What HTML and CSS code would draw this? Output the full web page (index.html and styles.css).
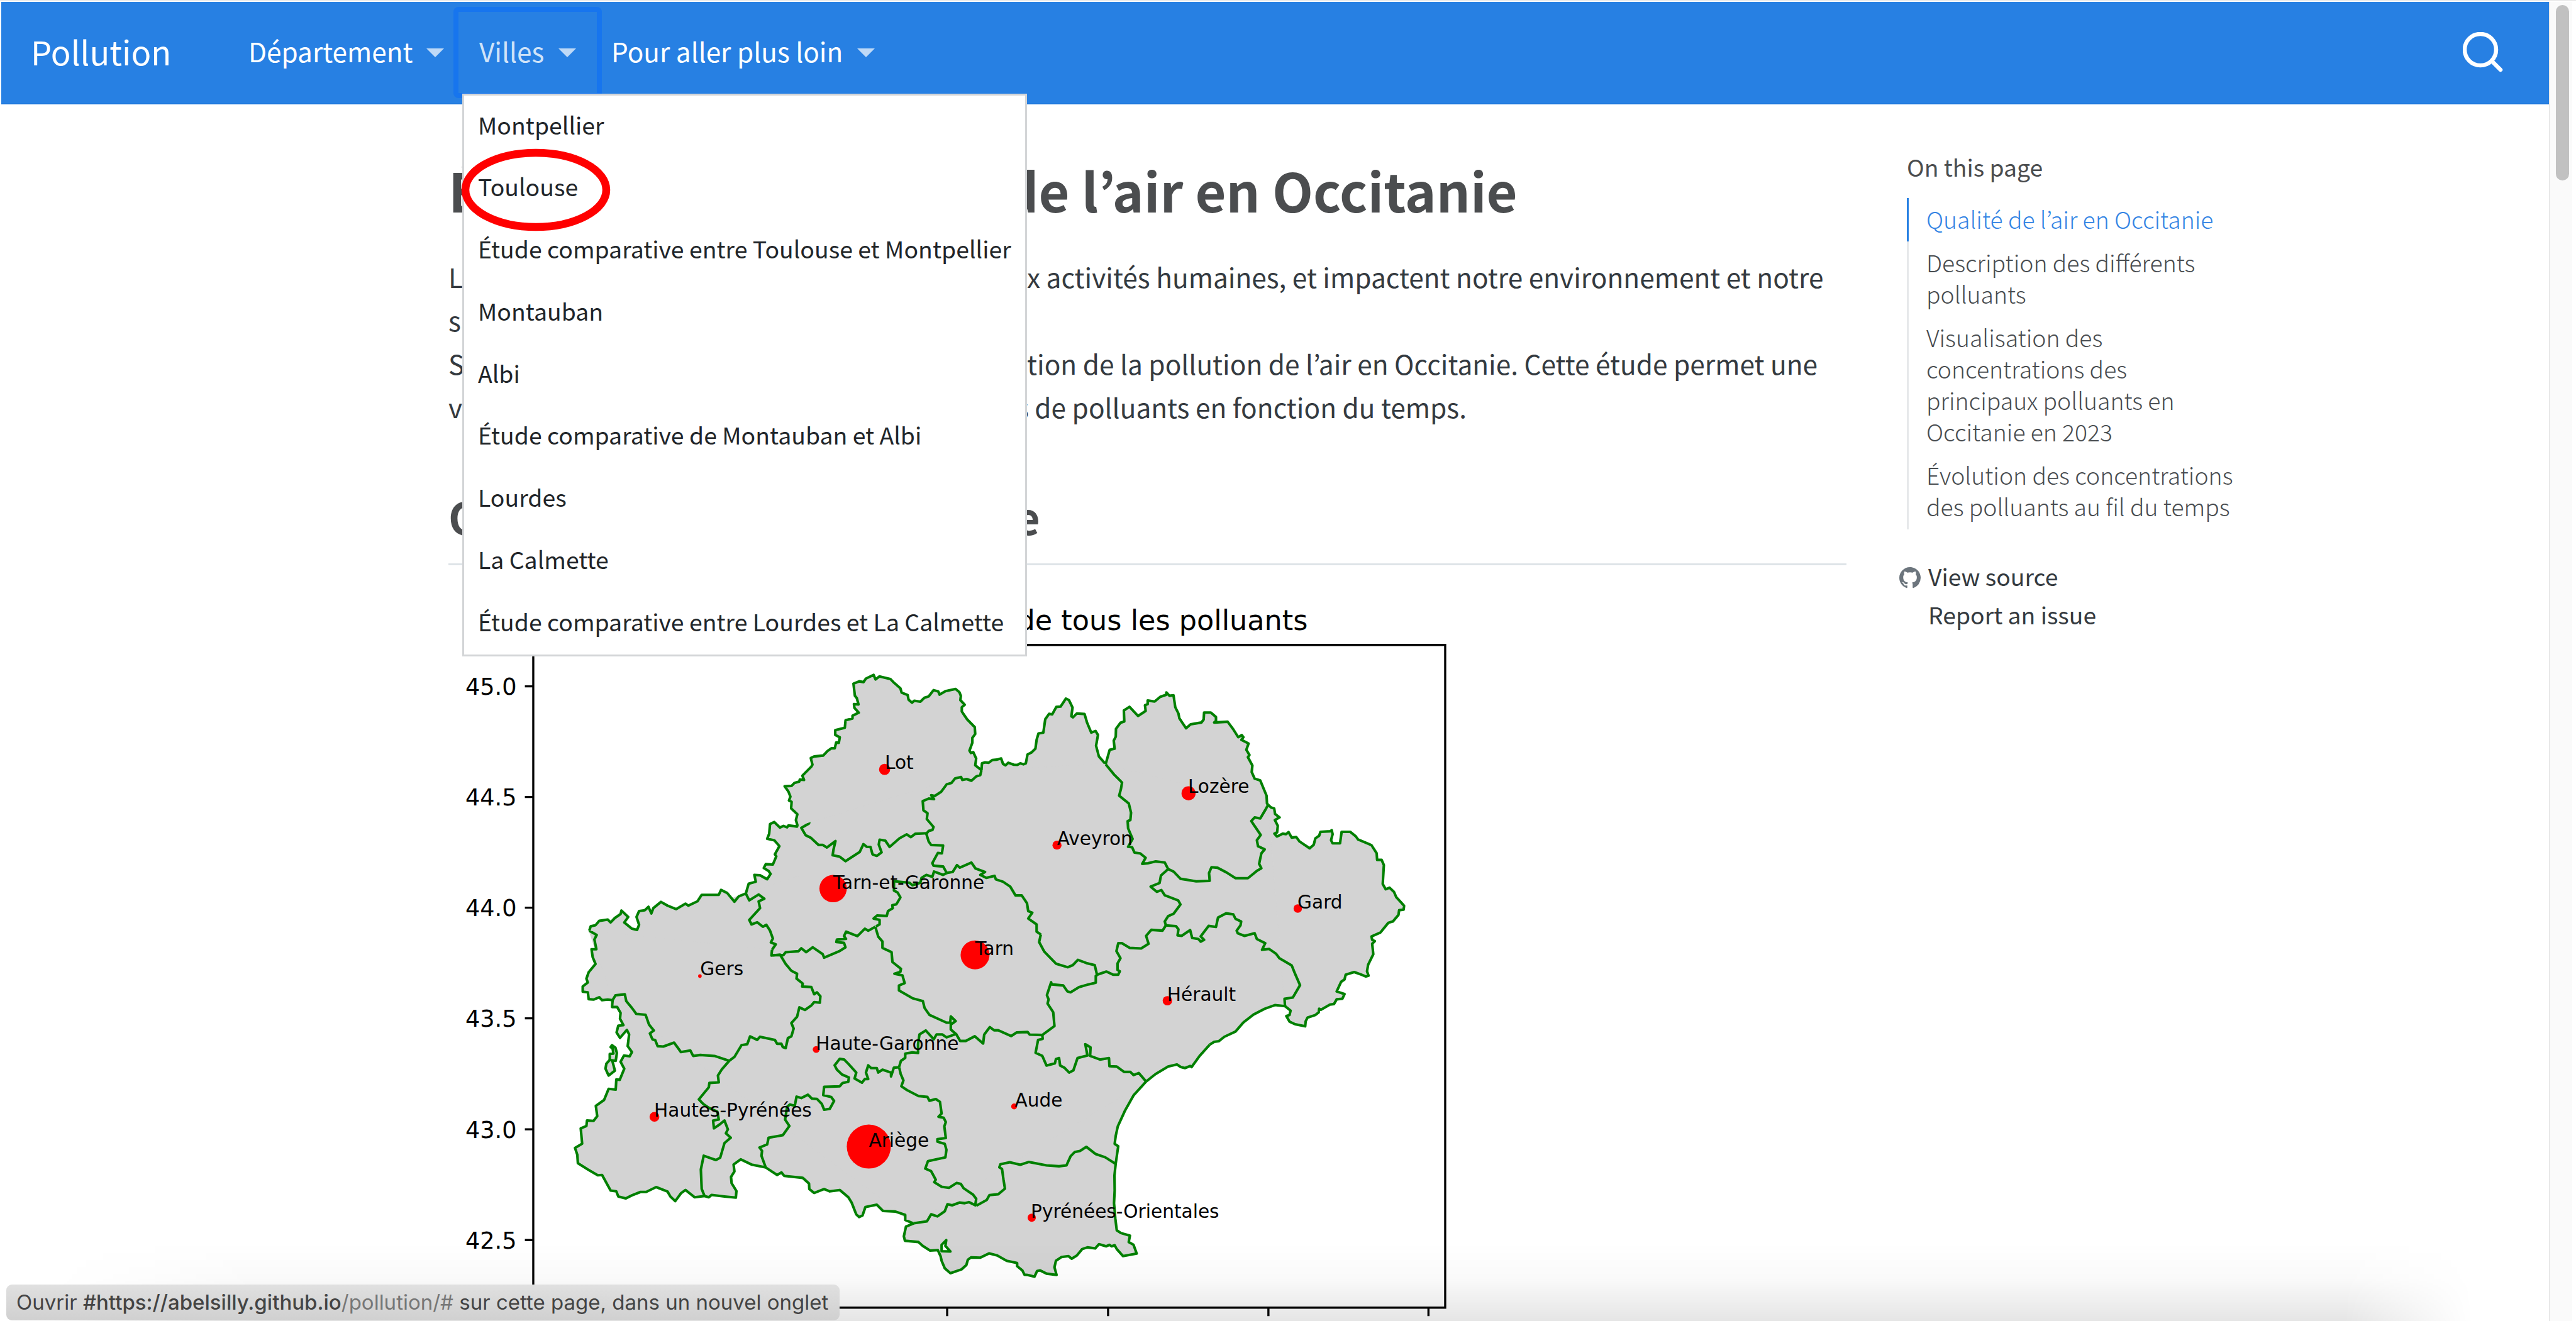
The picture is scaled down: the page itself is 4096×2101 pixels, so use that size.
FILE: index.html
```html
<!DOCTYPE html>
<html lang="fr">
<head>
<meta charset="utf-8">
<title>Pollution</title>
<link rel="stylesheet" href="styles.css">
</head>
<body>
<div class="page">
<div class="view">
<header class="navbar">
  <a class="brand">Pollution</a>
  <nav class="menu">
    <a class="nav-item"><span>Département</span><i class="caret"></i></a>
    <div class="nav-item open">
      <span>Villes</span><i class="caret"></i>
      <ul class="dropdown">
        <li>Montpellier</li>
        <li>Toulouse<svg class="ring" viewBox="0 0 240 132"><ellipse cx="120" cy="66" rx="112" ry="59"/></svg></li>
        <li>Étude comparative entre Toulouse et Montpellier</li>
        <li>Montauban</li>
        <li>Albi</li>
        <li>Étude comparative de Montauban et Albi</li>
        <li>Lourdes</li>
        <li>La Calmette</li>
        <li>Étude comparative entre Lourdes et La Calmette</li>
      </ul>
    </div>
    <a class="nav-item last"><span>Pour aller plus loin</span><i class="caret"></i></a>
  </nav>
  <svg class="search" viewBox="0 0 66 66"><circle cx="28" cy="28" r="25"/><path d="M46 46L60 60"/></svg>
</header>
<main class="content">
  <article class="article">
    <h1><span class="lead">Étude de la pollution</span><span>de l’air en Occitanie</span></h1>
    <div class="text">
      <p><span class="lead">Les polluants sont liés au</span><span>x activités humaines, et impactent notre environnement et notre</span></p>
      <p>santé.</p>
      <p><span class="lead">Suivi de l’évolu</span><span>tion de la pollution de l’air en Occitanie. Cette étude permet une</span></p>
      <p><span class="lead short">visualisation des taux</span><span>s de polluants en fonction du temps.</span></p>
    </div>
    <h2>Qualité de l’air en Occitanie</h2>
    <svg class="figure" viewBox="763.8 1020 1760 1230">
      <text class="title" x="2227" y="1075" text-anchor="end">Concentration de tous les polluants</text>
      <g class="land">
        <path class="base" d="M1043 1705L1004 1587L1100 1592L1270 1523L1320 1500L1358 1408L1671 1313L1881 1302L2159 1372L2188 1715L2171 1713L2154 1720L2135 1729L2117 1743L2104 1758L2085 1767L2068 1776L2060 1781L2029 1819L2018 1821L2004 1814L1989 1818L1968 1831L1952 1844L1556 2085Z"/>
        <g transform="translate(960 1580) scale(.48469 .33333)">
          <path d="M1228 1515L1200 1498 1200 1472 1165 1455 1122 1452 1100 1420 1060 1432 1050 1475 1038 1483 1028 1470 1012 1410 1000 1382 970 1345 935 1352 915 1340 880 1360 863 1340 862 1312 840 1283 775 1273 765 1255 750 1268 710 1230 660 1215 622 1188 597 1215 600 1250 588 1278 590 1310 607 1350 605 1384 565 1378 520 1370 510 1382 495 1376 460 1382 428 1345 412 1362 392 1402 375 1378 365 1353 325 1330 290 1355 270 1355 240 1372 218 1388 192 1378 185 1352 165 1348 135 1268 120 1270 85 1240 50 1208 48 1165 40 1130 65 1108 60 1030 80 1018 82 990 105 992 118 968 113 915 142 885 158 828 183 832 185 780 197 782 213 725 200 690 212 658 232 662 240 640 225 610 230 550 222 527 198 568 186 540 192 505 210 503 198 470 200 440 188 410 170 410 172 375"/>
          <path d="M172 375L155 372 135 375 125 360 105 372 88 370 85 335 67 332 67 305 85 285 80 265 88 232 112 190 102 155 98 115 115 115 108 65 116 42 90 20"/>
          <path d="M170 605L182 618 187 645 183 685 168 682 172 690 180 735 158 760 147 725 150 700 162 680 162 650 175 648 172 622 165 615Z"/>
        </g>
        <g transform="translate(960 1120) scale(.48469 .33333)">
          <path d="M90 1400L95 1378 112 1372 125 1350 155 1343 165 1358 180 1335 200 1315 203 1297 227 1330 213 1358 240 1390 258 1396 265 1370 256 1330 265 1300 285 1296 298 1278 308 1312 315 1285 342 1253 365 1272 395 1290 428 1262 438 1272 470 1250 485 1217 545 1217 553 1192 575 1208 600 1252 615 1225 640 1210 652 1245 685 1215 705 1237 685 1250 690 1285 652 1345 660 1368 680 1357 700 1380 712 1370 725 1400 735 1440 728 1460 745 1470 732 1498"/>
          <path d="M640 1210L650 1160 675 1150 670 1115 690 1117 715 1137 727 1110 720 1095 703 1080 710 1060 735 1062 747 1020 742 1010 758 968 740 938 715 930 722 905 725 855 740 845 760 873 772 865 785 872 790 862 820 868 823 850 838 833 865 833 862 852 835 875 850 912 868 925 895 962 910 962 925 975 955 942 948 985 945 1015 970 1022 990 1045 1040 998 1053 958 1065 972 1078 972 1085 1010 1100 1018 1117 1000 1107 960 1110 935 1130 940 1145 972 1180 928 1205 908 1220 922 1235 905 1275 902"/>
        </g>
        <g transform="translate(1300 1120) scale(.40816 .33333)">
          <path d="M143 865L136 835 142 805 116 775 118 742 107 735 113 715 105 690 89 662 118 660 130 645 150 638 152 628 170 630 163 608 200 562 205 552 198 518 212 510 250 505 268 482 284 468 298 468 304 438 315 440 319 412 300 400 300 375 340 363 343 325 372 316 372 302 398 286 380 262 378 242 397 244 390 212 382 200 376 138 400 126 418 130 428 112 460 93 468 116 484 101 530 114 545 133 572 162 577 184 602 196 606 220 620 235 630 225 655 230 672 210 690 203 710 171 730 178 735 194 760 176 802 165 818 182 824 200 822 222 840 246 828 258 828 280 850 320 882 360 884 395 872 415 872 440 860 480 866 492 876 488 888 520 884 555 910 580"/>
          <path d="M910 580L912 545 925 540 940 542 955 528 975 526 992 520 1000 548 1010 555 1022 542 1045 552 1060 553 1072 545 1085 550 1095 545 1102 500 1118 490 1135 470 1140 425 1148 392 1168 388 1172 355 1176 320 1192 292 1205 295 1222 257 1240 255 1262 214 1275 222 1290 260 1285 305 1292 310 1308 290 1340 293 1350 335 1368 388 1386 380 1396 400 1388 455 1400 510 1425 545"/>
        </g>
        <g transform="translate(1840 1100) scale(.38265 .44643)">
          <path d="M112 455L130 400 152 396 148 365 157 350 158 320 178 297 195 292 193 250 218 236 256 271 290 252 287 230 299 226 299 212 330 216 355 198 382 190 382 181 396 194 414 192 422 238 436 262 440 280 470 318 490 303 538 296 548 285 550 258 580 258 603 275 603 290 595 296 655 293 680 322 702 352 718 344 725 352 716 362 748 376 738 400 752 420 745 428 765 460 762 485 775 510 800 517 828 575 830 605 835 610"/>
          <path d="M835 610L848 620 862 624 866 645 886 658 865 668 878 690 875 715 863 720 874 731 900 720 915 722 926 714 940 735 960 733 975 750 1020 776 1038 762 1045 738 1062 728 1068 713 1110 711 1118 707 1122 722 1115 745 1122 757 1155 757 1162 713 1200 713 1225 730 1235 742 1285 760 1295 764 1318 795 1320 820 1340 820 1350 840 1345 912 1358 932 1375 926 1395 942 1405 962 1422 978 1440 995 1438 1010 1418 1012 1415 1030 1390 1055 1370 1060 1335 1097 1295 1112 1298 1125 1310 1130 1298 1140 1303 1180 1280 1220 1275 1245 1282 1262 1270 1265 1250 1258 1218 1248 1180 1258 1175 1276 1160 1285 1140 1322 1175 1332 1165 1350 1140 1352 1128 1370 1110 1372 1070 1392 1062 1388 1060 1402 1045 1412 1010 1422 1002 1436 1000 1455 955 1447 930 1437 916 1416 930 1412 935 1395 910 1378"/>
          <path class="line" d="M910 1378L865 1374 820 1388 770 1410 725 1440 690 1475 640 1495 615 1512 595 1514 575 1525"/>
        </g>
        <g transform="translate(1500 1640) scale(.35714 .36352)">
          <path class="line" d="M1568 388L1520 440 1482 492 1475 487 1450 497 1430 492 1412 480 1370 490 1310 525 1265 560"/>
          <path d="M1265 560L1205 625 1165 695 1130 770 1120 815 1115 852 1132 863 1120 945 1114 1000 1115 1070 1112 1130 1118 1200 1125 1257 1145 1270 1188 1282 1182 1312 1205 1325 1220 1366 1155 1378 1125 1345 1115 1327 1100 1332 1090 1325 1075 1332 1040 1322 1022 1342 985 1337 960 1345 935 1375 910 1390 895 1378 862 1382 835 1400 828 1430 838 1466 790 1460 760 1445 745 1448 733 1474 700 1466 685 1465 675 1445 650 1425 650 1410 600 1400 555 1375 517 1365 475 1385 430 1384 415 1395 408 1420 385 1440 332 1458 305 1435 290 1400 285 1378 272 1350 235 1352 200 1330 180 1312 115 1306 110 1285 120 1240 158 1224"/>
          <path class="hole" d="M312 1303L290 1325 290 1355 332 1356 308 1330Z"/>
        </g>
      </g>
      <g class="borders">
        <g transform="translate(1300 1120) scale(.40816 .33333)">
          <path d="M910 580L905 605 888 612 868 634 848 625 830 630 825 615 800 622 785 645 765 652 742 690 715 712 700 708 712 728 690 725 665 738 668 785 685 800 682 830 710 870 706 885 690 890 680 905"/>
          <path d="M680 905L690 945 700 962 750 965 745 1005 728 1003 705 1055 710 1068 750 1072 765 1105"/>
          <path d="M765 1105L790 1100 808 1065 820 1078 868 1052 885 1082 925 1100 905 1115 930 1130 965 1120 970 1138 1000 1150 1030 1175 1052 1220 1078 1220 1100 1260 1105 1300 1122 1308 1105 1338 1140 1368 1140 1405 1158 1420"/>
          <path d="M765 1105L750 1115 712 1098 705 1125 680 1115 660 1130 655 1155 622 1168 610 1155 545 1147 545 1195 560 1205 572 1230 555 1265 538 1270 540 1285 520 1300 515 1325 475 1322 460 1338 485 1345 485 1368 470 1378"/>
        </g>
        <g transform="translate(1540 1140) scale(.57398 .35714)">
          <path d="M405 1269L400 1305 415 1350 450 1408 485 1425 500 1415 515 1390 540 1405 565 1415 572 1463"/>
        </g>
        <g transform="translate(960 1580) scale(.48469 .33333)">
          <path d="M1095 0L1105 50 1120 75 1120 108 1152 130 1155 180 1185 215 1183 230 1162 240 1190 248 1198 288 1178 300 1178 325 1225 365 1262 380 1268 415 1285 450 1345 490 1358 490 1360 458 1377 482 1360 500 1360 525 1378 548"/>
          <path d="M1095 0L1070 20 1058 10 1032 48 992 25 985 48 992 62 960 65 958 78 985 82 990 105 968 125 915 158 910 140 875 105 852 130 835 110 825 125 780 130 772 145 735 145"/>
          <path d="M732 118L730 147 760 142 780 190 800 225 820 240 818 265 840 290 838 305 870 308 880 345 890 335 902 355 900 388 880 385 870 402 848 425 828 412 820 460 800 492 808 520 800 560 788 568 780 620 770 615 765 598 750 598 742 578 690 562 680 578 655 560 645 600 625 605 600 665 582 685"/>
          <path d="M172 375L182 350 215 345 220 380 240 415 255 445 288 450 300 500 317 530 303 545 312 575 322 580 330 610 350 612 388 592 412 640 445 632 455 660 480 655 530 660 582 685"/>
          <path d="M582 685L555 730 542 760 545 795 512 798 510 820 475 882 490 905 510 925 540 945 545 985 525 990 528 1030 550 1008 565 990 577 1035 570 1055 587 1078 565 1105 550 1180 535 1192 492 1170 482 1240 485 1340 495 1376"/>
          <path d="M710 1230L695 1170 697 1145 688 1128 715 1112 720 1078 770 1065 793 1018 778 985 785 920 795 908 812 915 818 868 835 875 858 858 872 878 890 880 907 905 915 935 935 930 950 890 940 870 912 860 915 818 970 815 980 798 1000 792 1002 770 978 755 960 730 952 708 970 675 985 678 1000 700 1028 745 1022 775 1048 797 1058 778 1070 778 1062 745 1070 708 1080 722 1100 722 1105 745 1120 730 1150 745 1150 765 1160 720 1178 718"/>
          <path d="M1178 718L1185 685 1200 670 1200 648 1225 642 1245 645 1245 600 1250 550 1272 530 1300 575 1310 550 1330 550 1345 565 1378 548"/>
        </g>
        <g transform="translate(1500 1640) scale(.35714 .36352)">
          <path d="M88 495L95 525 108 555 98 582 125 600 180 628 222 632 232 650 262 642 282 655 290 710 275 725 300 730 310 750 303 770 310 825 270 830 270 842 305 852 313 880 308 915 225 933 212 968 240 980 262 1020 255 1032 290 1053 325 1058 362 1035 382 1040 395 1060 440 1090 455 1110 450 1140"/>
          <path d="M158 1224L220 1215 240 1182 270 1192 305 1168 318 1135 340 1140 375 1127 400 1130 420 1125 455 1142"/>
          <path d="M455 1142L505 1115 518 1092 560 1088 592 1062 585 1020 578 970 565 962 570 948 615 938 665 950 705 937 790 953 850 957 885 953 905 910 925 890 950 885 980 866 1025 900 1070 915 1118 945"/>
          <path d="M358 335L378 370 405 370 448 348 488 382 493 340 520 305 540 320 560 320 622 347 648 330 700 328 710 340 770 342"/>
          <path d="M770 342L828 300 822 235 795 195 800 175 792 155 812 95 815 105 870 110 890 138 905 142 945 118 990 105 1025 97 1025 65 1032 62"/>
          <path d="M770 342L772 360 750 365 738 425 770 440 790 485 830 475 835 455 850 450 855 485 875 495 898 518 918 508 938 450 985 438 975 385 1000 400 998 440 1045 457 1088 450 1090 488 1125 490 1160 515 1190 515 1205 530 1230 520 1265 560"/>
        </g>
        <g transform="translate(1840 1100) scale(.38265 .44643)">
          <path d="M74 1258L115 1246 145 1258 168 1258 175 1245 165 1240 165 1215 178 1195 160 1168 168 1138 185 1138 220 1156 270 1158 303 1140 292 1110 315 1087 365 1090 380 1070"/>
          <path d="M380 1070L425 1073 436 1085 432 1108 450 1110 488 1088 497 1118 525 1122 535 1132 550 1125 535 1112 570 1072 603 1076 612 1040 648 1024 680 1028 690 1045 715 1055 712 1070 695 1090 700 1100 730 1110 775 1100 785 1122 822 1138 808 1163 840 1160 870 1178 885 1195 940 1223 955 1255 977 1298 945 1345 908 1350 910 1378"/>
          <path d="M380 1070L375 1055 390 1035 415 1025 445 990 435 975 375 955 360 935 340 942 312 922 352 908 358 880 390 855"/>
          <path d="M112 455L150 495 185 525 180 550 172 575 215 605 225 640 222 668 210 672 212 700 232 740 212 770 230 772 240 792 265 795 290 812 275 835 300 833 335 826 375 830 390 855"/>
          <path d="M390 855L415 865 445 892 515 902 575 900 572 870 583 848 610 850 650 868 690 890 745 890 785 862 805 852 795 835 805 795 820 780 790 768 785 745 802 725 760 672 775 658 800 662 822 630 835 610"/>
        </g>
      </g>
      <g class="dots">
        <circle cx="1506.5" cy="1312" r="9.5"/><circle cx="1800" cy="1441" r="7.7"/><circle cx="1418.8" cy="1515" r="23.3"/>
        <circle cx="1660.5" cy="1628" r="24.6"/><circle cx="2024" cy="1352.7" r="12"/><circle cx="2210" cy="1549" r="7.2"/>
        <circle cx="1988" cy="1706" r="8"/><circle cx="1192" cy="1664" r="3"/><circle cx="1390" cy="1789" r="5.8"/>
        <circle cx="1114.6" cy="1903.7" r="8.3"/><circle cx="1479.6" cy="1954.3" r="37.5"/><circle cx="1727" cy="1886" r="5"/>
        <circle cx="1757" cy="2075.5" r="7"/>
      </g>
      <g class="labels">
        <text x="1507" y="1311">Lot</text><text x="1800" y="1440.5">Aveyron</text><text x="1419" y="1515.5">Tarn-et-Garonne</text>
        <text x="1660.5" y="1628.5">Tarn</text><text x="2023" y="1351.7">Lozère</text><text x="2209.5" y="1549">Gard</text>
        <text x="1987.5" y="1706">Hérault</text><text x="1192.5" y="1663">Gers</text><text x="1389.5" y="1789.5">Haute-Garonne</text>
        <text x="1114" y="1903.7">Hautes-Pyrénées</text><text x="1479.6" y="1955">Ariège</text><text x="1728" y="1886.5">Aude</text>
        <text x="1755.5" y="2075.5">Pyrénées-Orientales</text>
      </g>
      <path class="axes" d="M908.3 1100H2461V2228.7H908.3ZM894 1170.500H908M894 1359H908M894 1547.500H908M894 1736H908M894 1925H908M894 2113.500H908M1613 2229V2243M1887 2229V2243M2160 2229V2243M2432.500 2229V2243"/>
      <g class="ticks" text-anchor="end">
        <text x="880" y="1185">45.0</text><text x="880" y="1373.500">44.5</text><text x="880" y="1562">44.0</text>
        <text x="880" y="1750.500">43.5</text><text x="880" y="1939.500">43.0</text><text x="880" y="2128">42.5</text>
      </g>
    </svg>
  </article>
  <aside class="sidebar">
    <h3>On this page</h3>
    <ul class="toc">
      <li class="active">Qualité de l’air en Occitanie</li>
      <li>Description des différents<br>polluants</li>
      <li>Visualisation des<br>concentrations des<br>principaux polluants en<br>Occitanie en 2023</li>
      <li>Évolution des concentrations<br>des polluants au fil du temps</li>
    </ul>
    <div class="actions">
      <a><svg class="github" viewBox="0 0 16 16"><path d="M8 0C3.58 0 0 3.58 0 8c0 3.54 2.29 6.53 5.47 7.59.4.07.55-.17.55-.38 0-.19-.01-.82-.01-1.49-2.01.37-2.53-.49-2.69-.94-.09-.23-.48-.94-.82-1.13-.28-.15-.68-.52-.01-.53.63-.01 1.08.58 1.23.82.72 1.21 1.87.87 2.33.66.07-.52.28-.87.51-1.07-1.78-.2-3.64-.89-3.64-3.95 0-.87.31-1.59.82-2.15-.08-.2-.36-1.02.08-2.12 0 0 .67-.21 2.2.82.64-.18 1.32-.27 2-.27s1.36.09 2 .27c1.53-1.04 2.2-.82 2.2-.82.44 1.1.16 1.92.08 2.12.51.56.82 1.27.82 2.15 0 3.07-1.87 3.75-3.65 3.95.29.25.54.73.54 1.48 0 1.07-.01 1.93-.01 2.2 0 .21.15.46.55.38A8.01 8.01 0 0 0 16 8c0-4.42-3.58-8-8-8z"/></svg>View source</a>
      <a>Report an issue</a>
    </div>
  </aside>
</main>
</div>
<div class="scrollbar"><div class="thumb"></div></div>
<div class="shade"></div>
<div class="status">Ouvrir <b>#https://abelsilly.github.io</b><em>/pollution/#</em> sur cette page, dans un nouvel onglet</div>
</div>
</body>
</html>
```
FILE: styles.css
```css
* { box-sizing: border-box; }
html, body { margin: 0; height: 100%; overflow: hidden; }
body { background: #fff; color: #343a40; font-family: "Noto Sans CJK KR", "Noto Sans", sans-serif; }
ul { list-style: none; margin: 0; padding: 0; }

.page { position: relative; display: flex; width: 4096px; height: 2101px; padding: 2px 6px 0 2px; border-top: 1px solid #e3e3e3; overflow: hidden; }
.view { flex: 1; min-width: 0; }

.navbar { display: flex; align-items: center; height: 163px; padding: 0 71px 6px 47px; background: #2780e3; border-bottom: 2px solid #1e78dd; color: #fff; white-space: nowrap; }
.brand { width: 330px; font-size: 52.5px; line-height: 60px; }
.menu { display: flex; flex: 1; height: 100%; font-size: 42.3px; line-height: 60px; }
.nav-item { position: relative; display: flex; flex: none; align-items: center; justify-content: space-between; height: 145px; margin-top: 8px; padding: 0 16px 6px; width: 343px; }
.nav-item.open { width: 236px; padding: 0 41px 6px; color: rgba(255,255,255,.8); box-shadow: inset 0 0 0 8px #1775ee; border-radius: 8px; margin-left: -1px; }
.nav-item.last { width: 450px; padding-left: 15px; }
.caret { width: 0; height: 0; margin-top: 6px; border: 14px solid transparent; border-top-color: rgba(255,255,255,.7); border-bottom: 0; }
.search { width: 66px; height: 66px; margin-top: 6px; fill: none; stroke: #fff; stroke-width: 6.5; stroke-linecap: round; }

.dropdown { position: absolute; z-index: 2; left: 14px; top: 137.5px; width: 898px; border: 3px solid #d3d5d7; background: #fff; color: #212529; font-size: 37.4px; }
.dropdown li { position: relative; height: 98.8px; padding-left: 22px; line-height: 93px; }
.ring { position: absolute; left: -6.5px; top: -14px; width: 240px; height: 132px; fill: none; stroke: #f00; stroke-width: 12.5; }

.content { display: flex; padding-left: 711px; }
.article { width: 2223px; flex: none; white-space: nowrap; }
h1 { display: flex; margin: 75px 0 0; font-size: 84.5px; line-height: 120px; color: #4b4d4f; font-weight: 700; }
.lead { display: inline-block; overflow: hidden; }
h1 .lead { width: 884px; }
.text { padding-top: 43.5px; font-size: 42.4px; }
p { display: flex; height: 69.3px; margin: 0; line-height: 69.3px; }
p .lead { width: 920px; }
p .short { width: 903px; }
h2 { margin: 94.7px 0 0; padding-bottom: 29.6px; border-bottom: 3px solid #dee4e8; font-size: 69.8px; line-height: 90px; color: #4b4d4f; }
.figure { display: block; width: 1643.6px; height: 1148.7px; margin-top: 52.5px; overflow: visible; font-family: "DejaVu Sans", sans-serif; }
.figure text { fill: #000; }
.title { font-size: 47.7px; }
.ticks { font-size: 39.2px; }
.labels { font-size: 31.7px; }
.land path { fill: #d3d3d3; stroke: #008000; stroke-width: 4.1; stroke-linejoin: round; vector-effect: non-scaling-stroke; }
.land .base { stroke: #d3d3d3; stroke-width: 2; }
.land .line, .borders path { fill: none; }
.land .hole { fill: #fff; }
.borders path { stroke: #008000; stroke-width: 4.1; stroke-linejoin: round; vector-effect: non-scaling-stroke; }
.dots { fill: #f00; }
.axes { fill: none; stroke: #000; stroke-width: 3.6; }

.sidebar { margin-left: 96px; padding-top: 69px; white-space: nowrap; }
h3 { margin: 0 0 20.3px; font-size: 37.3px; line-height: 60px; font-weight: 400; color: #4b4d4f; }
.toc { border-left: 3px solid #e6e8ea; color: #484c50; font-weight: 300; font-size: 37.3px; line-height: 50px; }
.toc li { padding: 7.5px 0 11.7px 28px; margin-left: -3px; border-left: 3px solid transparent; }
.toc .active { border-color: #2780e3; color: #3384e4; }
.actions { margin: 43.7px 0 0 -12px; font-size: 37.3px; line-height: 61.3px; color: #343a40; }
.actions a { display: flex; align-items: center; padding-left: 46px; }
.github { width: 34px; height: 34px; margin: 5px 12px 0 -46px; fill: #6c757d; }

.scrollbar { width: 37px; padding: 5px 5px 0 9px; background: #fafafa; border-left: 2px solid #e8e8e8; }
.thumb { height: 279px; border-radius: 12px; background: #c1c1c1; }
.shade { position: absolute; left: 0; right: 0; bottom: 0; height: 125px; background: linear-gradient(rgba(0,0,0,0), rgba(0,0,0,.02) 45%, rgba(0,0,0,.1)); -webkit-mask-image: linear-gradient(90deg, transparent 2%, #000 10%, #000 91%, transparent 96%); mask-image: linear-gradient(90deg, transparent 2%, #000 10%, #000 91%, transparent 96%); }
.status { position: absolute; left: 10px; bottom: 1px; width: 1325px; height: 57px; padding-left: 16px; border-radius: 9px; background: linear-gradient(#e0e0e0, #d0d0d0); color: #444; font: 33px/57px Inter, sans-serif; white-space: nowrap; }
.status b { font-weight: 500; }
.status em { font-style: normal; color: #777; }
```
